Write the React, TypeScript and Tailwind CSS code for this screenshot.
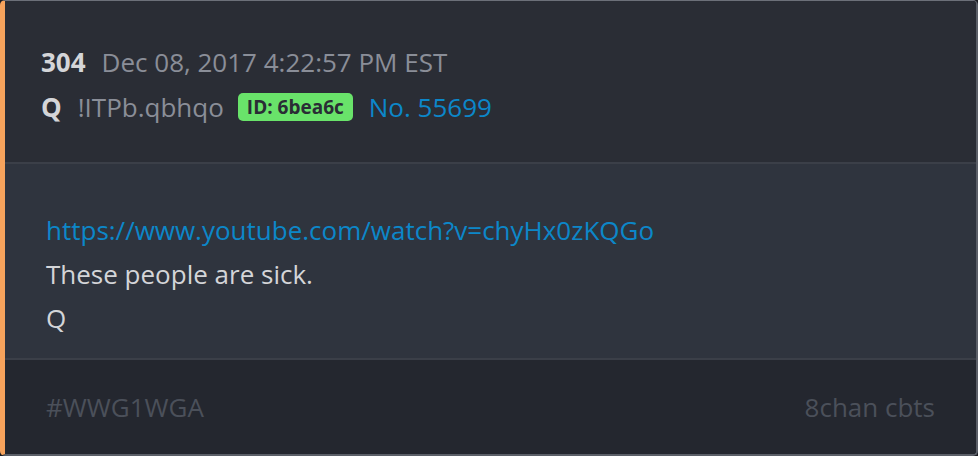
import React from "react";

export default function App() {
  return (
    <div className="w-[978px] h-[456px] bg-[#1b1d22]" style={{ fontFamily: '"Open Sans", "Noto Sans", sans-serif' }}>
      <div className="h-full w-full flex flex-col rounded-[5px] overflow-hidden border-t border-r-2 border-b-2 border-l-[5px] border-t-[#6c7079] border-r-[#5b5f68] border-b-[#5b5f68] border-l-[#f7a35c]">
        <div className="h-[163px] shrink-0 bg-[#2a2d35] pl-[36px] pt-[44px] flex flex-col gap-[11px] border-b-2 border-[#3b3f48]">
          <div className="flex items-baseline gap-[16px] text-[26px] leading-[34px]">
            <span className="font-bold text-[#d4d5d8]">304</span>
            <span className="text-[#8a8e98]">Dec 08, 2017 4:22:57 PM EST</span>
          </div>
          <div className="flex items-center text-[26px] leading-[34px]">
            <span className="font-bold text-[#d4d5d8]">Q</span>
            <span className="ml-[16px] text-[#8a8e98]">!ITPb.qbhqo</span>
            <span className="ml-[14px] bg-[#69e36a] text-[#2a2d35] font-bold text-[19px] leading-[28px] px-[9px] rounded-[5px]">ID: 6bea6c</span>
            <span className="ml-[16px] text-[#0c87c9]">No. 55699</span>
          </div>
        </div>
        <div className="h-[196px] shrink-0 bg-[#2f343e] pl-[41px] pt-[44px] flex flex-col text-[26px] leading-[44px] border-b-2 border-[#3b3f48]">
          <span className="text-[#0c87c9]">https://www.youtube.com/watch?v=chyHx0zKQGo</span>
          <span className="text-[#d4d5d8]">These people are sick.</span>
          <span className="text-[#d4d5d8]">Q</span>
        </div>
        <div className="flex-1 bg-[#24272f] pl-[41px] pr-[41px] flex items-center justify-between text-[26px] text-[#4b505a]">
          <span>#WWG1WGA</span>
          <span>8chan cbts</span>
        </div>
      </div>
    </div>
  );
}
